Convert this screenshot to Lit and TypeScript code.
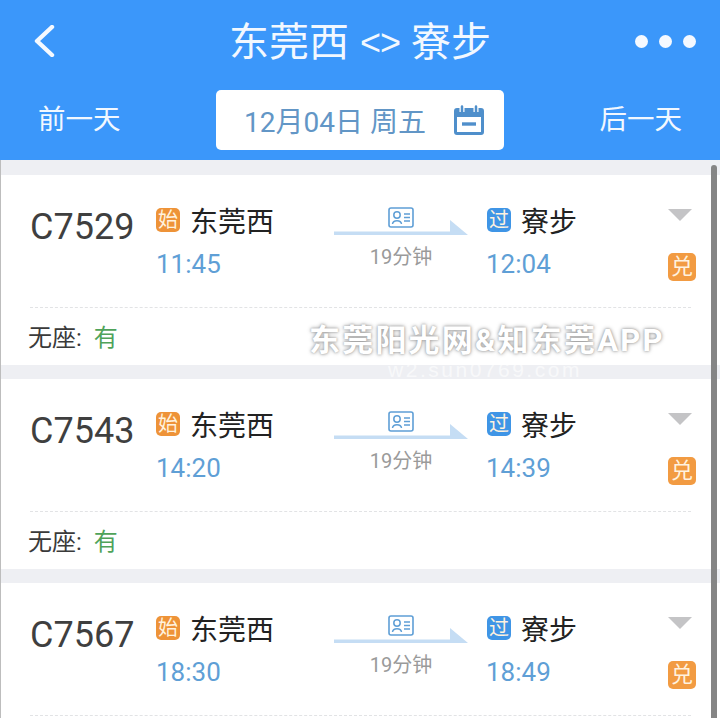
import { LitElement, html, css } from "lit";
import { customElement } from "lit/decorators.js";

const trains = [
  { no: "C7529", dep: "11:45", arr: "12:04", seat: true },
  { no: "C7543", dep: "14:20", arr: "14:39", seat: true },
  { no: "C7567", dep: "18:30", arr: "18:49", seat: false },
];

@customElement("app-root")
export class AppRoot extends LitElement {
  static styles = css`
    :host {
      display: block;
      position: relative;
      width: 720px;
      height: 718px;
      overflow: hidden;
      background: #eeeff3;
      font-family: Roboto, "Noto Sans CJK SC", sans-serif;
    }
    .header {
      height: 160px;
      background: #3b97fa;
      color: #f2f8ff;
      display: flex;
      flex-direction: column;
    }
    .top {
      height: 90px;
      display: flex;
      align-items: center;
      justify-content: space-between;
      padding: 0 24px 8px 33px;
      box-sizing: border-box;
    }
    .back { width: 22px; height: 32px; display: block; }
    .title {
      font-size: 40px;
      line-height: 52px;
      display: flex;
      align-items: center;
      gap: 11px;
      margin-left: 30px;
      padding-top: 3px;
    }
    .swap { font-size: 36px; font-family: "Liberation Sans", sans-serif; letter-spacing: -1px; }
    .dots { display: flex; gap: 11px; }
    .dots i { width: 13px; height: 13px; border-radius: 50%; background: #f5f9ff; display: block; }
    .dates {
      display: flex;
      align-items: flex-start;
      justify-content: space-between;
      padding: 0 38px;
    }
    .day { font-size: 27.5px; line-height: 60px; }
    .date {
      width: 288px;
      height: 60px;
      background: #fff;
      border-radius: 5px;
      color: #6296c6;
      font-size: 28px;
      display: flex;
      align-items: center;
      padding: 0 19px 0 28px;
      box-sizing: border-box;
      justify-content: space-between;
    }
    .cal { width: 32px; height: 32px; display: block; }
    .list { padding-top: 15px; display: flex; flex-direction: column; gap: 14px; }
    .card { background: #fff; height: 190px; box-sizing: border-box; padding: 0 29px 0 30px; flex: none; }
    .main { height: 133px; display: flex; border-bottom: 1px dashed #e2e3e5; box-sizing: border-box; }
    .no { width: 126px; padding-top: 31px; font-size: 36px; line-height: 42px; color: #3f3f3f; box-sizing: border-box; }
    .stop { padding-top: 28px; display: flex; flex-direction: column; }
    .dep { width: 178px; }
    .arr { width: 178px; }
    .name { display: flex; align-items: center; gap: 10px; height: 34px; font-size: 28px; color: #222; }
    .tag {
      width: 24px; height: 24px; border-radius: 5px; color: #fff2df;
      font-size: 20px; line-height: 24px; text-align: center; flex: none;
    }
    .orange { background: #ee9338; }
    .blue { background: #3f95e6; }
    .time { font-size: 26px; line-height: 32px; color: #5f9fd6; margin-top: 11px; }
    .arr .time { margin-left: -1px; }
    .mid { width: 153px; display: flex; flex-direction: column; align-items: stretch; padding-top: 32px; box-sizing: border-box; }
    .idrow { width: 134px; display: flex; justify-content: center; height: 21px; }
    .idcard { width: 26px; height: 21px; display: block; }
    .arrow { width: 134px; height: 18px; display: block; margin-top: -9px; }
    .dur { width: 134px; text-align: center; font-size: 20px; line-height: 24px; color: #9a9a9a; margin-top: 8px; }
    .side { flex: 1; display: flex; flex-direction: column; align-items: flex-end; padding-top: 34px; margin-right: -5px; }
    .tri { width: 24px; height: 12px; display: block; margin-right: 4px; }
    .dui {
      width: 28px; height: 28px; margin-top: 32px; border-radius: 5px;
      background: #f29b42; color: #fff2df; font-size: 22px; line-height: 28px; text-align: center;
    }
    .seat { height: 54px; display: flex; align-items: center; font-size: 24px; color: #3a3a3a; box-sizing: border-box; margin-left: -2px; }
    .seat span { color: #4fa35a; margin-left: 12px; }
    .bar { position: absolute; left: 711px; top: 165px; bottom: 0; width: 6px; background: #858585; border-radius: 3px 3px 0 0; }
    .edge { position: absolute; left: 0; top: 160px; bottom: 0; width: 1px; background: #bdbdbd; }
    .mark { position: absolute; left: 309px; top: 322px; width: 352px; color: #fff; pointer-events: none; }
    .mark b { display: block; font-weight: 700; font-size: 31px; line-height: 38px; letter-spacing: 2.200px; white-space: nowrap; text-shadow: 0 0 4px #9a9a9a, 0 0 2px #aaa; }
    .mark em { display: block; text-align: center; font-style: normal; font-size: 21px; line-height: 20px; letter-spacing: 2.500px; color: rgba(255,255,255,.6); font-family: "Liberation Sans", sans-serif; white-space: nowrap; }
  `;

  render() {
    return html`
      <div class="header">
        <div class="top">
          <svg class="back" viewBox="0 0 22 32"><path d="M19 2 L4 16 L19 30" fill="none" stroke="#f5f9ff" stroke-width="4.4" stroke-linecap="round" stroke-linejoin="round"/></svg>
          <div class="title"><span>东莞西</span><span class="swap">&lt;&gt;</span><span>寮步</span></div>
          <div class="dots"><i></i><i></i><i></i></div>
        </div>
        <div class="dates">
          <span class="day">前一天</span>
          <div class="date">
            <span>12月04日 周五</span>
            <svg class="cal" viewBox="0 0 32 32">
              <rect x="2.500" y="5.500" width="27" height="24" rx="1.500" fill="none" stroke="#4f8fcb" stroke-width="3"/>
              <path d="M3 7 H29 V13 H3 Z" fill="#4f8fcb"/>
              <path d="M9 2.500 V8 M23 2.500 V8" stroke="#fff" stroke-width="5"/>
              <path d="M9 2.500 V8 M23 2.500 V8" stroke="#4f8fcb" stroke-width="2.500" stroke-linecap="round"/>
              <path d="M9 20 H23" stroke="#4f8fcb" stroke-width="3.400"/>
            </svg>
          </div>
          <span class="day">后一天</span>
        </div>
      </div>
      <div class="list">
        ${trains.map((t) => html`
          <div class="card">
            <div class="main">
              <div class="no">${t.no}</div>
              <div class="stop dep">
                <div class="name"><span class="tag orange">始</span>东莞西</div>
                <div class="time">${t.dep}</div>
              </div>
              <div class="mid">
                <div class="idrow">
                  <svg class="idcard" viewBox="0 0 26 21">
                    <rect x="1" y="1" width="24" height="19" rx="2" fill="#fff" stroke="#5f9fd6" stroke-width="1.600"/>
                    <circle cx="9" cy="8" r="3.200" fill="none" stroke="#5f9fd6" stroke-width="1.500"/>
                    <path d="M4.500 17 C5 12.500 13 12.500 13.500 17" fill="none" stroke="#5f9fd6" stroke-width="1.500"/>
                    <path d="M16 7 H22 M16 10.500 H22 M16 14 H22" stroke="#5f9fd6" stroke-width="1.300"/>
                  </svg>
                </div>
                <svg class="arrow" viewBox="0 0 134 18">
                  <path d="M0 12.500 H116 V1 L134 16 H0 Z" fill="#c5ddf4"/>
                </svg>
                <div class="dur">19分钟</div>
              </div>
              <div class="stop arr">
                <div class="name"><span class="tag blue">过</span>寮步</div>
                <div class="time">${t.arr}</div>
              </div>
              <div class="side">
                <svg class="tri" viewBox="0 0 24 12"><path d="M0 0 H24 L12 12 Z" fill="#c4c4c6"/></svg>
                <div class="dui">兑</div>
              </div>
            </div>
            ${t.seat ? html`<div class="seat">无座: <span>有</span></div>` : ""}
          </div>
        `)}
      </div>
      <div class="edge"></div>
      <div class="bar"></div>
      <div class="mark"><b>东莞阳光网&amp;知东莞APP</b><em>w2.sun0769.com</em></div>
    `;
  }
}
